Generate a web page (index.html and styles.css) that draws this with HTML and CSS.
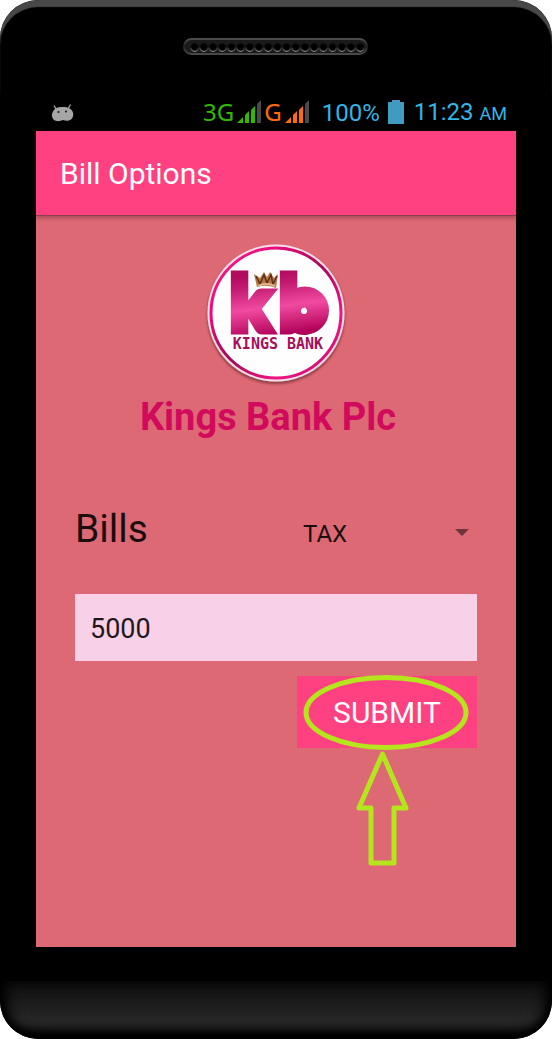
FILE: index.html
```html
<!DOCTYPE html>
<html lang="en">
<head>
<meta charset="utf-8">
<meta name="viewport" content="width=device-width, initial-scale=1">
<title>Bill Options</title>
<link rel="stylesheet" href="styles.css">
</head>
<body>
<div class="phone">
  <div class="phone-top">
    <svg class="speaker" viewBox="0 0 186 18" aria-hidden="true">
      <defs>
        <linearGradient id="rim" x1="0" y1="0" x2="0" y2="1">
          <stop offset="0" stop-color="#4c4c4c"/><stop offset=".5" stop-color="#202020"/><stop offset="1" stop-color="#4a4a4a"/>
        </linearGradient>
        <linearGradient id="holeRim" x1="0" y1="0" x2="0" y2="1">
          <stop offset=".4" stop-color="#0a0a0a"/><stop offset="1" stop-color="#8a8a8a"/>
        </linearGradient>
        <pattern id="holes" x="7" y="0" width="9.2" height="18" patternUnits="userSpaceOnUse">
          <circle cx="4.6" cy="9.5" r="3.8" fill="#000" stroke="url(#holeRim)" stroke-width="1.2"/>
        </pattern>
      </defs>
      <rect x="1" y="1" width="183" height="15" rx="7.5" fill="#1a1a1a" stroke="url(#rim)" stroke-width="2"/>
      <rect x="7" y="0" width="174.8" height="18" fill="url(#holes)"/>
    </svg>
  </div>

  <div class="status">
    <svg class="droid" viewBox="0 0 24 18" role="img" aria-label="Android">
      <path d="M3 1.500L5 5M19.500 0.500L17.500 4" stroke="#a6a6a6" stroke-width="1.300" fill="none"/>
      <path d="M3 6C5 3 9 3 11 3C15 3 18 3.500 20 5.500C23 8 23 13 20 15.500C17 17.500 14 16.500 12 16C9 17.500 5 17.500 3 16C0 13 .5 9 3 6Z" fill="#a6a6a6"/>
      <circle cx="7.500" cy="8" r="1" fill="#111"/><circle cx="15" cy="7.500" r="1" fill="#111"/>
    </svg>
    <div class="signals">
      <span class="net net-3g">3G</span>
      <svg class="bars bars-green" viewBox="0 0 24 23" aria-hidden="true">
        <path d="M0 23L6 17V23ZM8 15L12 11V23H8ZM14 10L18 6V23H14Z" fill="currentColor"/><path d="M20 4L24 0V23H20Z" fill="#4a4a4a"/>
      </svg>
      <span class="net net-g">G</span>
      <svg class="bars bars-orange" viewBox="0 0 24 23" aria-hidden="true">
        <path d="M0 23L6 17V23ZM8 15L12 11V23H8ZM14 10L18 6V23H14Z" fill="currentColor"/><path d="M20 4L24 0V23H20Z" fill="#4a4a4a"/>
      </svg>
    </div>
    <span class="percent">100%</span>
    <svg class="battery" viewBox="0 0 16 24" aria-hidden="true"><path d="M4 0H12V2H16V24H0V2H4Z" fill="#3f9bc1"/></svg>
    <span class="clock">11:23 <small>AM</small></span>
  </div>

  <div class="screen">
    <header class="app-bar"><h1>Bill Options</h1></header>
    <main class="content">
      <svg class="logo" viewBox="0 0 144 144" role="img" aria-label="Kings Bank logo">
        <defs>
          <linearGradient id="ring" x1="0" y1="0" x2="1" y2="1">
            <stop offset="0" stop-color="#ff1b8d"/><stop offset=".25" stop-color="#e60d7c"/><stop offset=".5" stop-color="#a30a58"/><stop offset=".75" stop-color="#f01484"/><stop offset="1" stop-color="#c00a68"/>
          </linearGradient>
          <linearGradient id="mark" gradientUnits="userSpaceOnUse" x1="68" y1="29" x2="76" y2="92">
            <stop offset="0" stop-color="#b00b5e"/><stop offset=".2" stop-color="#c41a72"/><stop offset=".55" stop-color="#f04ba0"/><stop offset="1" stop-color="#b00058"/>
          </linearGradient>
          <filter id="drop" x="-10%" y="-10%" width="120%" height="125%">
            <feDropShadow dx="0" dy="2" stdDeviation="1.500" flood-color="#401018" flood-opacity=".6"/>
          </filter>
        </defs>
        <circle cx="72" cy="70" r="68.500" fill="#f6dfe8" filter="url(#drop)"/>
        <circle cx="72" cy="70" r="65" fill="#fefefe" stroke="url(#ring)" stroke-width="3"/>
        <text class="mark" x="26" y="88" fill="url(#mark)" stroke="url(#mark)">k</text>
        <text class="mark" x="75" y="88" fill="url(#mark)" stroke="url(#mark)">b</text>
        <circle cx="101" cy="67.500" r="13.500" fill="none" stroke="url(#mark)" stroke-width="21"/>
        <circle cx="100" cy="68" r="3" fill="#fff"/>
        <path d="M50 31L56 35L60 29L63 34L66 29L70 35L74 31L72 45Q62 41 53 44Z" fill="#b5763f"/>
        <path d="M52 33L56 41L60 32L63 40L67 32L69 41L73 33" fill="none" stroke="#5e2c1c" stroke-width="1.500"/>
        <path d="M54 43Q62 39 71 43" fill="none" stroke="#e2b58c" stroke-width="2"/>
        <text class="caption" x="74" y="106" text-anchor="middle">KINGS BANK</text>
      </svg>
      <h2 class="bank-name">Kings Bank Plc</h2>

      <form class="form">
        <div class="row">
          <label class="bills" for="bill">Bills</label>
          <div class="picker">
            <select id="bill"><option>TAX</option></select>
            <svg class="caret" viewBox="0 0 14 7" aria-hidden="true"><path d="M0 0H14L7 7Z" fill="#6f353b"/></svg>
          </div>
        </div>
        <input class="amount" type="text" value="5000" aria-label="Amount">
        <div class="submit-wrap">
          <button class="submit" type="button">SUBMIT</button>
          <svg class="callout" viewBox="0 0 180 192" aria-hidden="true">
            <g fill="none" stroke="#b5e61d" stroke-width="5" stroke-linejoin="round">
              <ellipse cx="89" cy="36.500" rx="80" ry="35"/>
              <path d="M85.500 78L109 132H97V187H74V132H62Z"/>
            </g>
          </svg>
        </div>
      </form>
    </main>
  </div>
  <div class="phone-gap"></div>
  <div class="phone-chin"></div>
</div>
</body>
</html>
```

FILE: styles.css
```css
* {
  box-sizing: border-box;
}

body {
  margin: 0;
  background: #fff;
  font-family: Roboto, "Liberation Sans", sans-serif;
}

.phone {
  display: flex;
  flex-direction: column;
  min-height: 100vh;
  background: #000;
  border-radius: 38px;
  overflow: hidden;
}

.phone-top {
  display: flex;
  justify-content: center;
  padding: 38px 0;
  border-radius: 38px 38px 0 0;
  box-shadow: inset 0 7px 1px #484848;
}

.speaker {
  width: 186px;
  height: 18px;
}

.status {
  display: flex;
  align-items: center;
  height: 37px;
  padding: 0 45px 0 51px;
  color: #33b5e5;
  font-size: 24px;
  line-height: 36px;
}

.droid {
  width: 24px;
  height: 18px;
}

.signals {
  display: flex;
  align-items: center;
  gap: 3px;
  margin-left: auto;
  margin-right: 13px;
  padding-bottom: 2px;
}

.net {
  font-family: "Noto Sans", "Open Sans", sans-serif;
}

.net-3g,
.bars-green {
  color: #33b800;
}

.net-g,
.bars-orange {
  color: #ff6a0d;
}

.bars {
  width: 24px;
  height: 23px;
}

.battery {
  width: 16px;
  height: 24px;
  margin: 0 10px 2px 8px;
}

.clock small {
  font-size: 18px;
}

.screen {
  display: flex;
  flex-direction: column;
  flex: 1;
  margin: 0 36px;
  background: #dd6975;
}

.app-bar {
  padding: 25px 24px 23px;
  background: #ff4081;
  box-shadow: 0 1px 0 #8e3f4f, 0 2px 4px 1px rgba(90, 30, 40, 0.4);
}

.app-bar h1 {
  margin: 0;
  color: #fff;
  font-size: 30px;
  font-weight: 400;
  line-height: 36px;
}

.content {
  display: flex;
  flex-direction: column;
  padding: 28px 39px;
}

.logo {
  align-self: center;
  width: 144px;
  height: 144px;
}

.mark {
  font-family: Lato, sans-serif;
  font-size: 76px;
  font-weight: 900;
  stroke-width: 7px;
}

.caption {
  fill: #a80f5b;
  font-family: "DejaVu Sans Mono", monospace;
  font-size: 15px;
  font-weight: 700;
}

.bank-name {
  margin: 6px 16px 0 0;
  color: #d10a5c;
  font-size: 38px;
  font-weight: 700;
  line-height: 48px;
  text-align: center;
}

.form {
  display: flex;
  flex-direction: column;
  margin-top: 62px;
}

.row {
  display: flex;
  align-items: center;
  justify-content: space-between;
  height: 52px;
}

.bills {
  color: #1b0d0e;
  font-size: 39px;
  line-height: 48px;
}

.picker {
  position: relative;
  width: 180px;
  padding-top: 8px;
}

.picker select {
  appearance: none;
  width: 100%;
  height: 44px;
  padding: 2px 24px 0 6px;
  border: 0;
  background: transparent;
  color: #1b0d0e;
  font: 24px Roboto, sans-serif;
}

.caret {
  position: absolute;
  top: 26px;
  right: 8px;
  width: 14px;
  height: 7px;
  pointer-events: none;
}

.amount {
  width: 100%;
  height: 67px;
  margin-top: 39px;
  padding: 2px 15px 0;
  border: 0;
  border-radius: 0;
  background: #f8d0e7;
  color: #1e181c;
  font: 27px Roboto, sans-serif;
}

.submit-wrap {
  position: relative;
  align-self: flex-end;
  width: 180px;
  margin-top: 15px;
}

.submit {
  width: 100%;
  height: 72px;
  padding: 0;
  border: 0;
  background: #ff4081;
  color: #fff;
  font: 30px Roboto, sans-serif;
}

.callout {
  position: absolute;
  top: 0;
  left: 0;
  width: 180px;
  height: 192px;
  overflow: visible;
  pointer-events: none;
}

.phone-gap {
  height: 34px;
}

.phone-chin {
  height: 58px;
  border-radius: 0 0 38px 38px;
  background: linear-gradient(#0c0c0c, #262626 65%, #222 75%, #000);
  box-shadow: inset 14px 0 14px -8px #000, inset -14px 0 14px -8px #000, inset 0 -4px 10px #000;
}
```
